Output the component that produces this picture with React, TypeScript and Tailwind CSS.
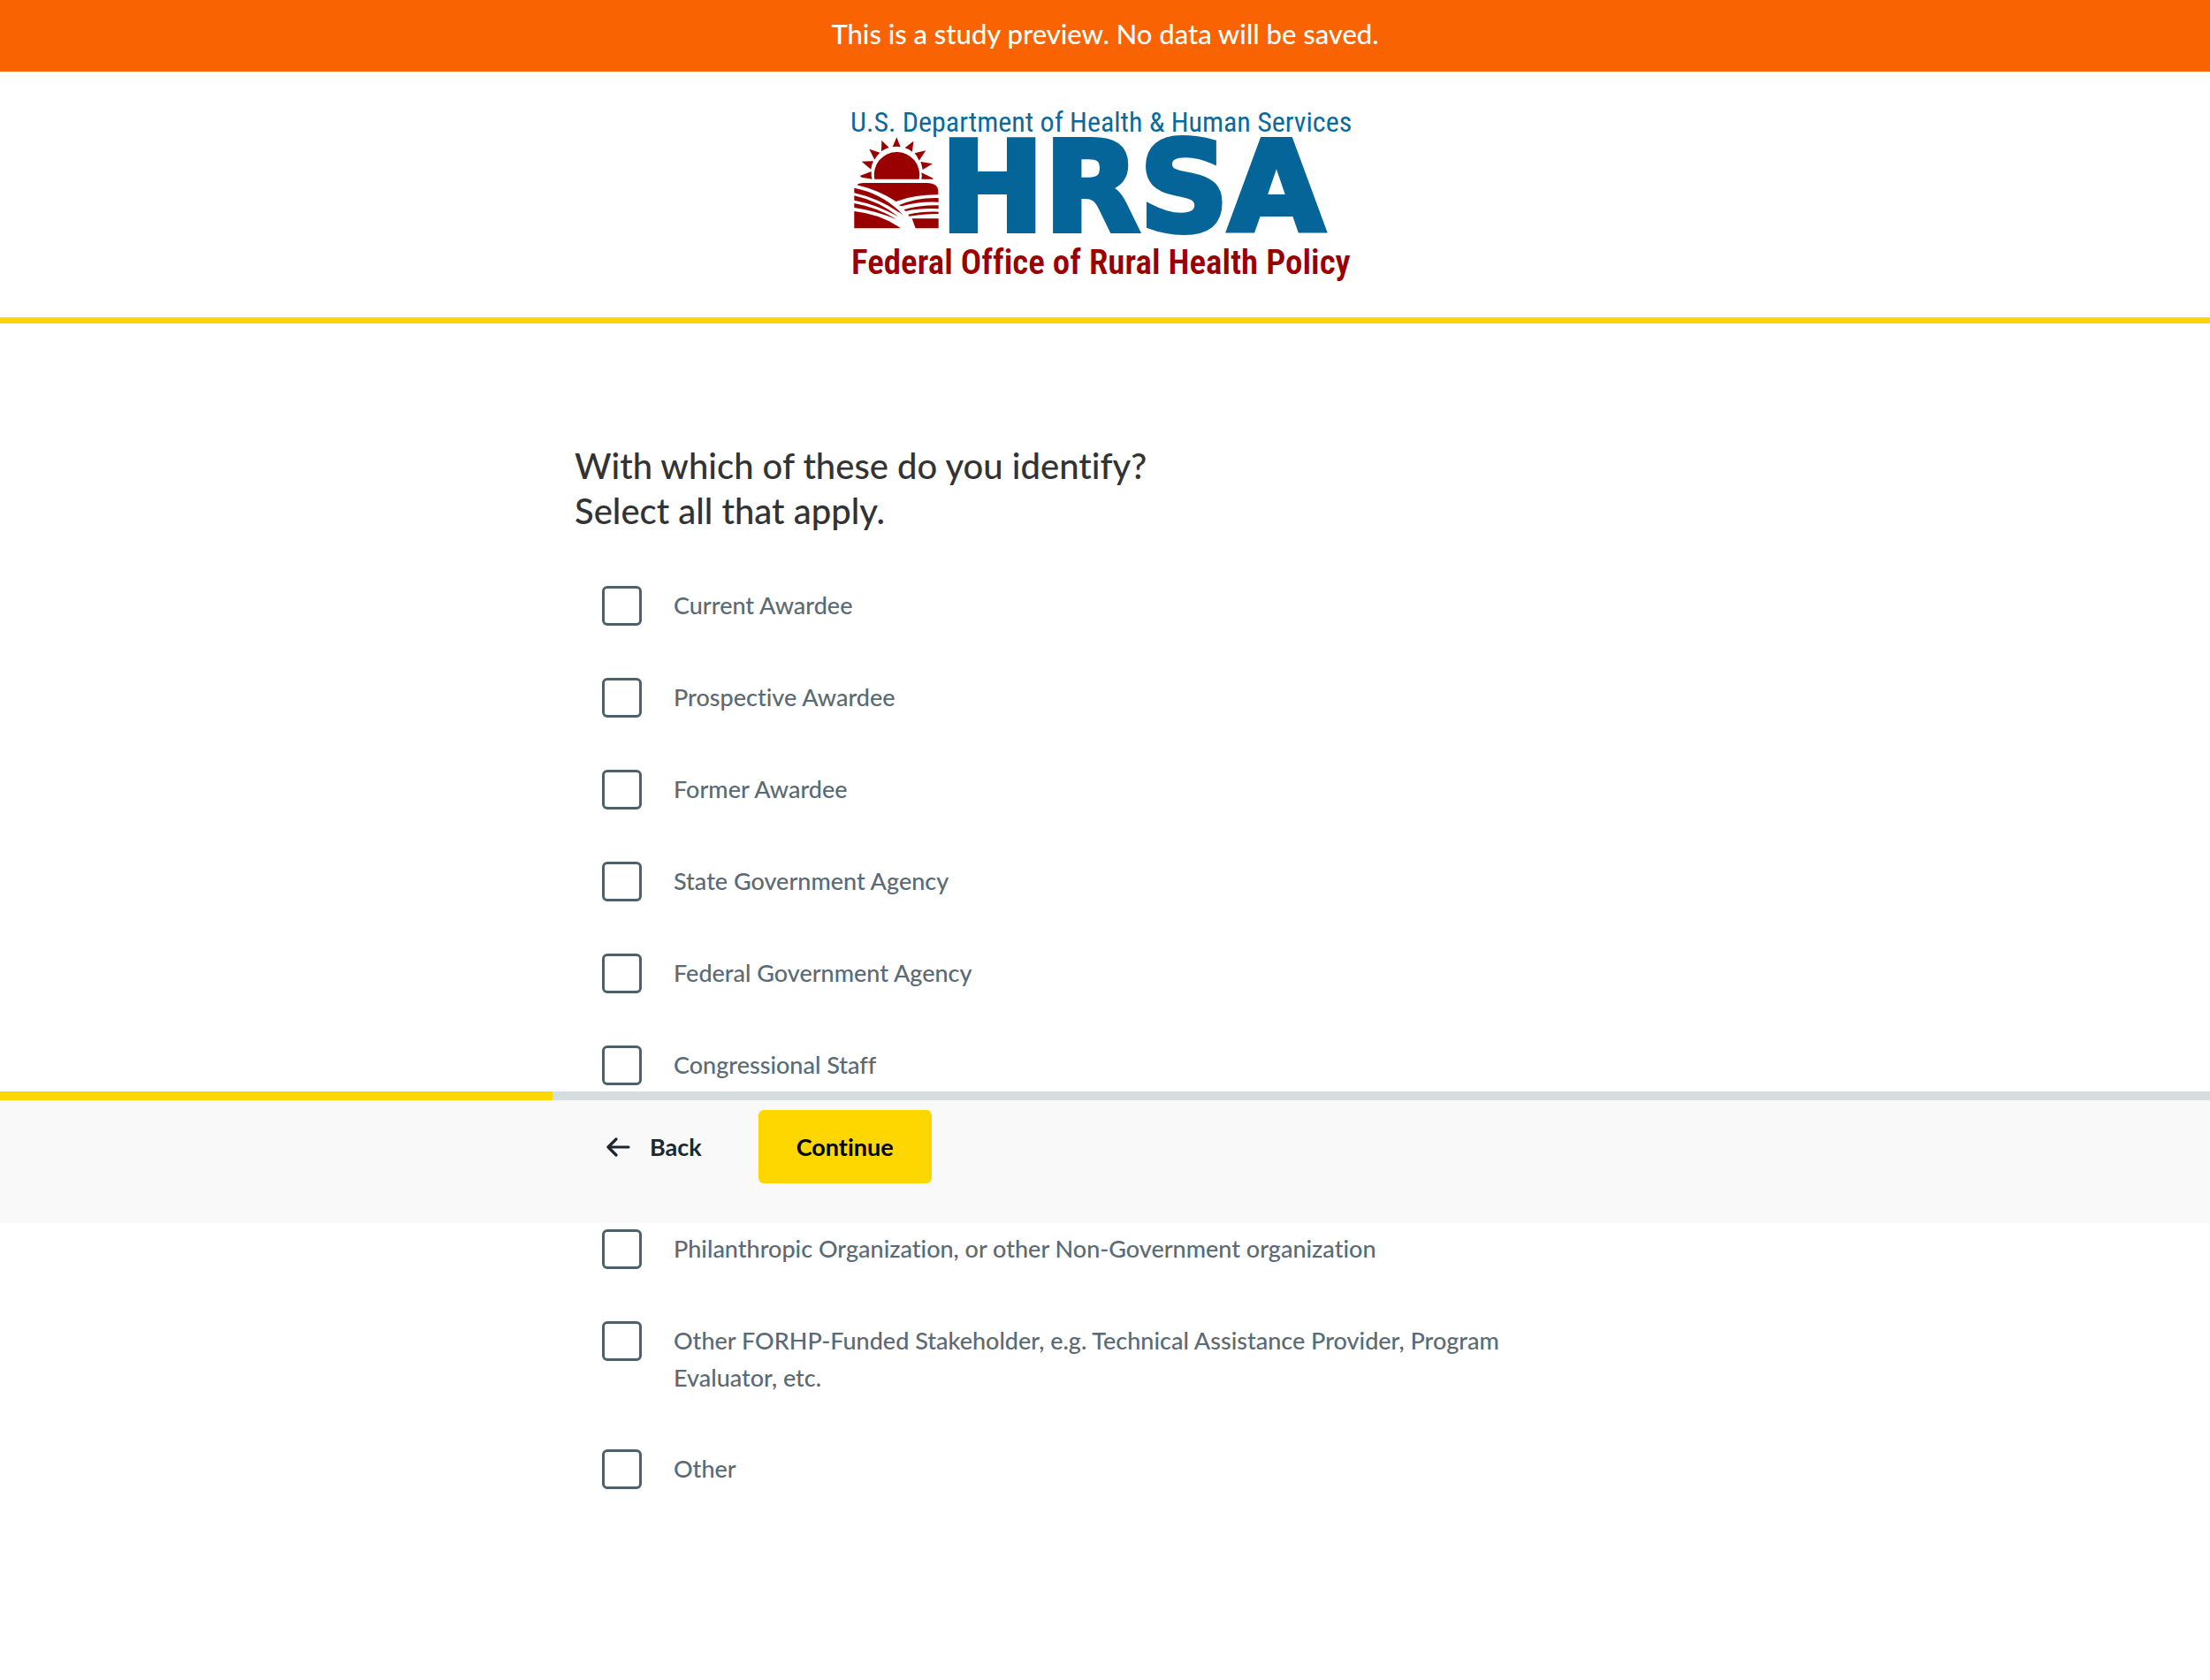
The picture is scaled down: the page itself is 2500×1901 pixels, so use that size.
import { useState } from "react";
import { clsx } from "clsx";

const audienceOptions = [
  "Current Awardee",
  "Prospective Awardee",
  "Former Awardee",
  "State Government Agency",
  "Federal Government Agency",
  "Congressional Staff",
];

const otherOptions = [
  "Philanthropic Organization, or other Non-Government organization",
  "Other FORHP-Funded Stakeholder, e.g. Technical Assistance Provider, Program Evaluator, etc.",
  "Other",
];

const HrsaLogo = () => (
  <svg
    viewBox="0 0 620 240"
    className="w-full max-w-[620px]"
    role="img"
    aria-label="HRSA Federal Office of Rural Health Policy"
  >
    <text
      x="22"
      y="49"
      className="fill-[#0a6a9d] font-['Roboto_Condensed',sans-serif] text-[32px] font-normal"
    >
      U.S. Department of Health &amp; Human Services
    </text>
    <g transform="scale(0.33333)" fill="#990000">
      {/* sun and rays */}
      <path d="M148 308 A77 77 0 1 1 299 308 Z" />
      <path d="M223 166 L236 199 Q222 196 209 199 Z" />
      <path d="M172 177 L197 201 Q183 205 171 214 Z" />
      <path d="M280 179 L276 215 Q264 206 251 202 Z" />
      <path d="M130 206 L166 218 Q155 229 148 242 Z" />
      <path d="M322 211 L299 245 Q293 231 284 220 Z" />
      <path d="M104 248 L144 247 Q137 261 136 275 Z" />
      <path d="M345 256 L311 276 Q309 262 304 249 Z" />
      <path d="M98 297 L137 282 Q136 296 140 308 L104 302 Z" />
      <path d="M347 305 L307 286 Q310 297 307 308 L345 308 Z" />
      {/* fields */}
      <path d="M88 328 Q96 321 112 321 L325 321 Q364 322 364 350 L364 361 Q285 360 221 384 Q160 345 88 328 Z" />
      <path d="M79 338 Q178 357 246 431 Q166 374 79 355 Z" />
      <path d="M79 364 Q166 384 229 436 Q155 394 79 380 Z" />
      <path d="M79 390 Q160 405 223 445 Q150 415 79 405 Z" />
      <path d="M79 417 Q170 427 237 475 L79 475 Z" />
      <path d="M230 397 Q290 370 365 372 L365 386 Q300 382 240 400 Z" />
      <path d="M247 412 Q300 396 365 397 L365 409 Q305 406 254 417 Z" />
      <path d="M262 428 Q310 417 365 419 L365 426 Q310 427 265 434 Z" />
      <path d="M275 442 L365 442 L365 475 L287 475 Z" />
    </g>
    <text
      x="124"
      y="161"
      strokeWidth="6"
      className="fill-[#056599] stroke-[#056599] font-['DejaVu_Sans',sans-serif] text-[140px] font-bold"
    >
      HRSA
    </text>
    <text
      x="23"
      y="210"
      className="fill-[#990000] font-['Roboto_Condensed',sans-serif] text-[39px] font-semibold"
    >
      Federal Office of Rural Health Policy
    </text>
  </svg>
);

const BackArrow = () => (
  <svg
    viewBox="0 0 27 22"
    className="h-[22px] w-[27px]"
    fill="none"
    stroke="currentColor"
    strokeWidth="3.2"
    strokeLinecap="round"
    strokeLinejoin="round"
    aria-hidden="true"
  >
    <path d="M11 2 L2 11 L11 20" />
    <path d="M3 11 H25" />
  </svg>
);

type OptionListProps = {
  options: string[];
  selected: string[];
  onToggle: (option: string) => void;
  className?: string;
};

const OptionList = ({
  options,
  selected,
  onToggle,
  className,
}: OptionListProps) => (
  <ul
    className={clsx(
      "mx-auto flex w-full max-w-[1200px] flex-col gap-[59px] pr-20 pl-[31px]",
      className
    )}
  >
    {options.map((option) => (
      <li key={option}>
        <label className="flex cursor-pointer items-start gap-9">
          <input
            type="checkbox"
            checked={selected.includes(option)}
            onChange={() => onToggle(option)}
            className="size-[45px] shrink-0 appearance-none rounded-md border-3 border-[#4d616d] bg-white checked:bg-[#4d616d]"
          />
          <span className="py-px text-[27px] leading-[42px] font-medium text-[#5b6a73]">
            {option}
          </span>
        </label>
      </li>
    ))}
  </ul>
);

const App = () => {
  const [selected, setSelected] = useState<string[]>([]);

  const toggle = (option: string) =>
    setSelected((prev) =>
      prev.includes(option)
        ? prev.filter((item) => item !== option)
        : [...prev, option]
    );

  return (
    <div className="min-h-screen bg-white font-['Lato','Open_Sans',sans-serif] [font-variant-ligatures:none]">
      <div className="bg-[#f96302] px-4 pt-4 pb-5 text-center text-[31px] leading-[45px] font-medium text-white">
        This is a study preview. No data will be saved.
      </div>

      <header className="flex justify-center border-b-7 border-[#ffd700] py-[19px]">
        <HrsaLogo />
      </header>

      <main className="pt-[136px] pb-16">
        <h1 className="mx-auto w-full max-w-[1200px] text-[40px] leading-[51px] font-medium text-[#333333]">
          With which of these do you identify?
          <br />
          Select all that apply.
        </h1>

        <OptionList
          options={audienceOptions}
          selected={selected}
          onToggle={toggle}
          className="pt-[59px] pb-[7px]"
        />

        <nav className="bg-[#f9f9f9]">
          <div className="h-[10px] bg-[#d4dddf]">
            <div className="h-full w-1/4 bg-[#ffd700]" />
          </div>
          <div className="mx-auto flex w-full max-w-[1200px] items-center gap-16 px-9 pt-[11px] pb-[45px] text-[27px] leading-[42px] font-bold">
            <button
              type="button"
              className="flex cursor-pointer items-center gap-[22px] text-[#1d282d]"
            >
              <BackArrow />
              Back
            </button>
            <button
              type="button"
              className="h-[83px] cursor-pointer rounded-md bg-[#ffd700] px-[43px] text-black"
            >
              Continue
            </button>
          </div>
        </nav>

        <OptionList
          options={otherOptions}
          selected={selected}
          onToggle={toggle}
          className="pt-[7px]"
        />
      </main>
    </div>
  );
};

export default App;
